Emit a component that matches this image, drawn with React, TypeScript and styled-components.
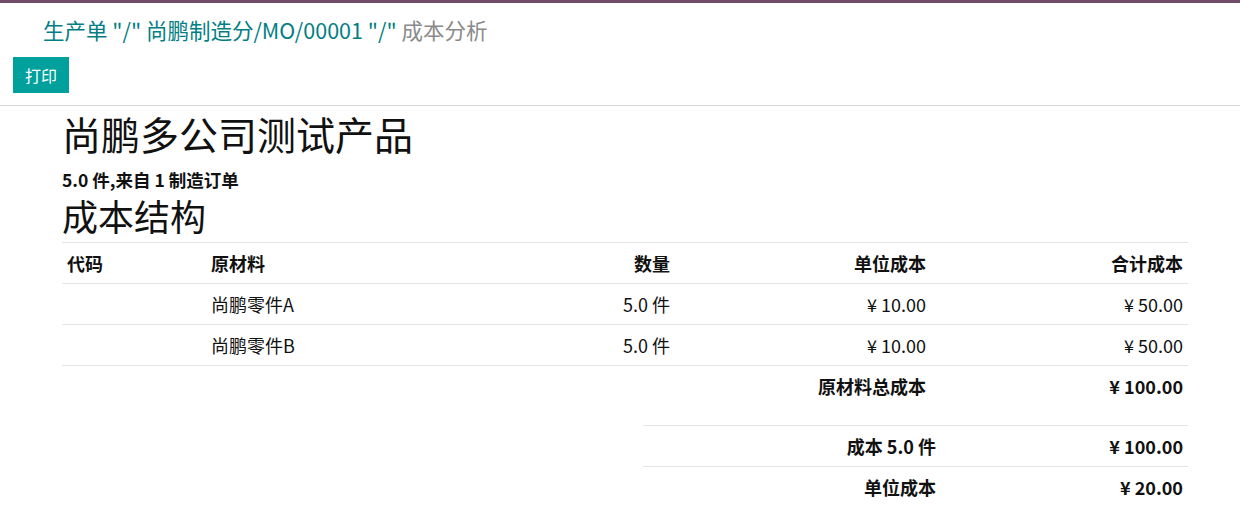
import React from "react";
import styled, { createGlobalStyle } from "styled-components";

const G = createGlobalStyle`
  body { margin: 0; font-family: "Noto Sans CJK SC", "Noto Sans", sans-serif; color: #111; background: #fff; }
`;
const Top = styled.div`border-top: 3px solid #714b67;`;
const Control = styled.div`padding: 12px 13px 12px; border-bottom: 1px solid #d8d8d8;`;
const Crumbs = styled.div`font-size: 21.5px; line-height: 30px; padding-left: 30px; color: #017e84;`;
const Gray = styled.span`color: #8a8a8a;`;
const Btn = styled.button`
  margin-top: 12px; background: #00a09d; color: #fff; border: 0; height: 36px; width: 56px;
  font-family: inherit; font-size: 16px; padding: 0;
`;
const Page = styled.div`padding: 0 52px 0 62px;`;
const H1 = styled.div`font-size: 39px; line-height: 54px;`;
const Sub = styled.div`font-size: 17.5px; font-weight: 700; line-height: 24px; margin-top: 8px;`;
const H2 = styled.div`font-size: 36px; line-height: 46px;`;
const Table = styled.div`margin-top: 4px;`;
const Row = styled.div<{ $head?: boolean }>`
  display: grid; grid-template-columns: 144px 1fr 140px 256px 257px;
  height: 40px; align-items: center; font-size: 18px;
  border-top: 1px solid #e2e4e8;
  font-weight: ${p => (p.$head ? 700 : 400)};
  & > div { padding: 0 5px; }
`;
const R = styled.div`text-align: right;`;
const Sum = styled.div`margin-left: 581px; margin-top: 19px;`;
const SRow = styled.div`
  display: grid; grid-template-columns: 1fr 247px; height: 40px; align-items: center;
  font-size: 18px; font-weight: 700; border-top: 1px solid #e2e4e8;
  & > div { padding: 0 5px; text-align: right; }
`;

export default function App() {
  return (
    <>
      <G />
      <Top>
        <Control>
          <Crumbs>生产单 "/" 尚鹏制造分/MO/00001 "/" <Gray>成本分析</Gray></Crumbs>
          <Btn>打印</Btn>
        </Control>
        <Page>
          <H1>尚鹏多公司测试产品</H1>
          <Sub>5.0 件,来自 1 制造订单</Sub>
          <H2>成本结构</H2>
          <Table>
            <Row $head><div>代码</div><div>原材料</div><R>数量</R><R>单位成本</R><R>合计成本</R></Row>
            <Row><div></div><div>尚鹏零件A</div><R>5.0 件</R><R>¥ 10.00</R><R>¥ 50.00</R></Row>
            <Row><div></div><div>尚鹏零件B</div><R>5.0 件</R><R>¥ 10.00</R><R>¥ 50.00</R></Row>
            <Row $head><div></div><div></div><div></div><R>原材料总成本</R><R>¥ 100.00</R></Row>
          </Table>
          <Sum>
            <SRow><div>成本 5.0 件</div><div>¥ 100.00</div></SRow>
            <SRow><div>单位成本</div><div>¥ 20.00</div></SRow>
          </Sum>
        </Page>
      </Top>
    </>
  );
}
